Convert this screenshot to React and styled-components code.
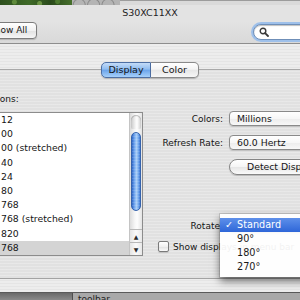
import React from 'react';
import styled, { createGlobalStyle } from 'styled-components';

const Global = createGlobalStyle`
  html, body { margin: 0; padding: 0; background: #e9e9e9; }
  body { width: 300px; height: 300px; overflow: hidden; }
`;

const Screen = styled.div`
  width: 300px;
  height: 300px;
  overflow: hidden;
  display: flex;
  flex-direction: column;
  font-family: "DejaVu Sans", "Liberation Sans", sans-serif;
  font-size: 9px;
  color: #151515;
`;

const DesktopStrip = styled.div`
  display: flex;
  height: 5px;
  flex: none;
`;

const Foliage = styled.div`
  width: 72px;
  background:
    radial-gradient(circle at 20% 40%, #5f8a3c 0 2px, transparent 3px),
    radial-gradient(circle at 55% 70%, #6c9444 0 2px, transparent 3px),
    radial-gradient(circle at 80% 30%, #4d7a30 0 2px, transparent 3px),
    linear-gradient(90deg, #2d4f1d, #3f6a28 40%, #2a4a1b 70%, #466f2c);
`;

const GreyDesk = styled.div`
  width: 48px;
  background:
    radial-gradient(circle at 15% 100%, transparent 0 5px, #8a8a8a 6px, transparent 7px),
    radial-gradient(circle at 45% 100%, transparent 0 5px, #8a8a8a 6px, transparent 7px),
    radial-gradient(circle at 75% 100%, transparent 0 5px, #8a8a8a 6px, transparent 7px),
    #b4b4b4;
`;

const WindowTop = styled.div`
  flex: 1;
  background: linear-gradient(#9c9c9c 0 1px, #dadada 1px);
`;

const TitleBar = styled.div`
  height: 16px;
  flex: none;
  line-height: 16px;
  text-align: center;
  font-size: 9.5px;
  color: #1e1e1e;
  background: #e3e3e3;
`;

const Toolbar = styled.div`
  height: 23px;
  flex: none;
  display: flex;
  justify-content: space-between;
  align-items: flex-start;
  padding-top: 1px;
  box-sizing: border-box;
  background: linear-gradient(#e3e3e3, #d9d9d9);
  border-bottom: 1px solid #8d8d8d;
`;

const ToolButton = styled.div`
  margin-left: -18px;
  width: 55px;
  height: 17px;
  box-sizing: border-box;
  border: 1px solid #7c7c7c;
  border-radius: 4px;
  background: linear-gradient(#ffffff, #f1f1f1 50%, #e1e1e1 51%, #f6f6f6);
  box-shadow: 0 1px 1px rgba(0, 0, 0, 0.18);
  padding-left: 6px;
  line-height: 15px;
  white-space: nowrap;
  font-size: 9px;
`;

const SearchField = styled.div`
  margin-top: 2px;
  margin-right: -12px;
  width: 59px;
  height: 16px;
  box-sizing: border-box;
  border-radius: 8px;
  background: #fff;
  border: 1px solid #6f8fb8;
  box-shadow: 0 0 0 2px #9ec0ea, inset 0 1px 1px rgba(0, 0, 0, 0.25);
  display: flex;
  align-items: center;
  padding-left: 5px;
`;

const Content = styled.div`
  flex: 1;
  display: flex;
  flex-direction: column;
  background: repeating-linear-gradient(#ededed 0 2px, #e5e5e5 2px 3px);
`;

const TabBox = styled.div`
  margin-top: 25px;
  height: 210px;
  box-sizing: border-box;
  border-top: 1px solid #a9a9a9;
  border-bottom: 1px solid #a3a3a3;
  display: flex;
  flex-direction: column;
  background: repeating-linear-gradient(rgba(0,0,0,0.02) 0 2px, rgba(0,0,0,0.05) 2px 3px);
`;

const Tabs = styled.div`
  margin-top: -8px;
  display: flex;
  justify-content: center;
`;

const Tab = styled.div`
  height: 16px;
  box-sizing: border-box;
  width: ${p => p.w}px;
  text-align: center;
  line-height: 14px;
  font-size: 9.5px;
  border: 1px solid ${p => (p.active ? '#4d6fa4' : '#8a8a8a')};
  border-radius: ${p => (p.first ? '5px 0 0 5px' : '0 5px 5px 0')};
  ${p => (p.first ? '' : 'border-left: none;')}
  background: ${p =>
    p.active
      ? 'linear-gradient(#c4dcf8, #8fbcf0 45%, #6aa3ea 50%, #a6d0fa)'
      : 'linear-gradient(#ffffff, #f4f4f4 45%, #e6e6e6 50%, #f7f7f7)'};
  box-shadow: 0 1px 1px rgba(0, 0, 0, 0.2);
`;

const Pane = styled.div`
  display: grid;
  grid-template-columns: 143px 1fr;
`;

const LeftCol = styled.div`
  display: flex;
  flex-direction: column;
`;

const ListLabel = styled.div`
  margin-top: 15px;
  margin-left: -36px;
  line-height: 12px;
  white-space: nowrap;
`;

const ListBox = styled.div`
  margin-top: 7px;
  margin-left: -2px;
  height: 144px;
  box-sizing: border-box;
  border: 1px solid #8c8c8c;
  background: #fff;
  display: flex;
`;

const Rows = styled.div`
  flex: 1;
  display: flex;
  flex-direction: column;
`;

const Row = styled.div`
  height: 14.2px;
  line-height: 14.2px;
  padding-left: 2px;
  white-space: nowrap;
  font-size: 9.3px;
  background: ${p => (p.selected ? '#d4d4d4' : 'transparent')};
`;

const ScrollBar = styled.div`
  width: 12px;
  flex: none;
  display: flex;
  flex-direction: column;
  border-left: 1px solid #c4c4c4;
  background: linear-gradient(90deg, #dcdcdc, #f6f6f6 40%, #fdfdfd 60%, #e4e4e4);
`;

const Track = styled.div`
  flex: 1;
  display: flex;
  flex-direction: column;
  align-items: center;
  padding-top: 2px;
`;

const TrackCap = styled.div`
  width: 10px;
  height: 14px;
  border-radius: 5px 5px 2px 2px;
  background: linear-gradient(90deg, #c9c9c9, #f4f4f4 45%, #ffffff 60%, #d0d0d0);
  box-shadow: inset 0 1px 1px rgba(0,0,0,0.25);
`;

const Thumb = styled.div`
  margin-top: 3px;
  width: 10px;
  height: 79px;
  border-radius: 5px;
  box-sizing: border-box;
  border: 1px solid #3563ad;
  background:
    repeating-linear-gradient(rgba(255,255,255,0.12) 0 1px, transparent 1px 3px),
    linear-gradient(90deg, #2f67c8, #6ea4ee 30%, #a8cdf7 55%, #7fb2f0 75%, #3e78d6);
`;

const ArrowBtn = styled.div`
  height: 12px;
  border-top: 1px solid #b8b8b8;
  display: flex;
  align-items: center;
  justify-content: center;
  font-size: 6px;
  color: #2a2a2a;
  background: linear-gradient(90deg, #e4e4e4, #fafafa 50%, #e8e8e8);
`;

const RightCol = styled.div`
  padding-top: 33px;
  display: flex;
  flex-direction: column;
`;

const FormRow = styled.div`
  display: grid;
  grid-template-columns: 80px 90px;
  column-gap: 6px;
  align-items: center;
  margin-top: ${p => p.mt || 0}px;
`;

const Label = styled.div`
  text-align: right;
  white-space: nowrap;
`;

const Popup = styled.div`
  height: 15px;
  box-sizing: border-box;
  border: 1px solid #8a8a8a;
  border-radius: 4px;
  background: linear-gradient(#ffffff, #f7f7f7 50%, #ececec 51%, #f8f8f8);
  box-shadow: 0 1px 1px rgba(0, 0, 0, 0.15);
  padding-left: 7px;
  line-height: 13px;
  white-space: nowrap;
  font-size: 9.3px;
  position: relative;
`;

const PillButton = styled.div`
  height: 16px;
  box-sizing: border-box;
  border: 1px solid #858585;
  border-radius: 8px;
  background: linear-gradient(#ffffff, #f5f5f5 50%, #e6e6e6 51%, #fafafa);
  box-shadow: 0 1px 1px rgba(0, 0, 0, 0.18);
  padding-left: 17px;
  line-height: 14px;
  white-space: nowrap;
  font-size: 9.3px;
`;

const Menu = styled.div`
  position: absolute;
  top: -5px;
  left: -10px;
  width: 95px;
  padding: 4px 0 3px;
  background: rgba(255, 255, 255, 0.94);
  box-shadow: 0 4px 8px rgba(0, 0, 0, 0.55), 0 0 0 1px rgba(0,0,0,0.12);
  z-index: 5;
`;

const MenuItem = styled.div`
  height: 14px;
  line-height: 14px;
  padding-left: 17px;
  position: relative;
  font-size: 9.7px;
  color: ${p => (p.hl ? '#fff' : '#1a1a1a')};
  background: ${p => (p.hl ? 'linear-gradient(#5e90ea, #2e66d8)' : 'transparent')};
`;

const Check = styled.span`
  position: absolute;
  left: 5px;
  top: 0;
  font-weight: bold;
`;

const CheckRow = styled.div`
  margin-top: 8px;
  padding-left: 15px;
  display: flex;
  align-items: center;
  white-space: nowrap;
`;

const CheckBox = styled.div`
  width: 11px;
  height: 11px;
  box-sizing: border-box;
  border: 1px solid #7a7a7a;
  border-radius: 2px;
  background: linear-gradient(#ffffff, #f0f0f0 50%, #e0e0e0 51%, #fafafa);
  box-shadow: 0 1px 1px rgba(0, 0, 0, 0.15);
  margin-right: 4px;
`;

const BottomBand = styled.div`
  height: 7px;
  flex: none;
  display: flex;
  background: linear-gradient(#6a6a6a, #8a8a8a);
  border-top: 1px solid #5a5a5a;
`;

const BandSeg = styled.div`
  width: ${p => p.w}px;
  border-right: 1px solid #4e4e4e;
`;

const BandText = styled.div`
  padding-left: 5px;
  font-size: 9px;
  line-height: 12px;
  color: #222;
  background: #a9a9a9;
  flex: 1;
`;

const rows = ['12', '00', '00 (stretched)', '40', '24', '80', '768', '768 (stretched)', '820', '768'];

function SearchIcon() {
  return (
    <svg width="10" height="10" viewBox="0 0 10 10">
      <circle cx="4" cy="4" r="2.8" fill="none" stroke="#3a3a3a" strokeWidth="1.4" />
      <line x1="6.1" y1="6.1" x2="9" y2="9" stroke="#3a3a3a" strokeWidth="1.8" strokeLinecap="round" />
    </svg>
  );
}

export default function App() {
  return (
    <Screen>
      <Global />
      <DesktopStrip>
        <Foliage />
        <GreyDesk />
        <WindowTop />
      </DesktopStrip>
      <TitleBar>S30XC11XX</TitleBar>
      <Toolbar>
        <ToolButton>Show All</ToolButton>
        <SearchField>
          <SearchIcon />
        </SearchField>
      </Toolbar>
      <Content>
        <TabBox>
          <Tabs>
            <Tab first active w={50}>Display</Tab>
            <Tab w={48}>Color</Tab>
          </Tabs>
          <Pane>
            <LeftCol>
              <ListLabel>Resolutions:</ListLabel>
              <ListBox>
                <Rows>
                  {rows.map((r, i) => (
                    <Row key={i} selected={i === rows.length - 1}>{r}</Row>
                  ))}
                </Rows>
                <ScrollBar>
                  <Track>
                    <TrackCap />
                    <Thumb />
                  </Track>
                  <ArrowBtn>▲</ArrowBtn>
                  <ArrowBtn>▼</ArrowBtn>
                </ScrollBar>
              </ListBox>
            </LeftCol>
            <RightCol>
              <FormRow>
                <Label>Colors:</Label>
                <Popup>Millions</Popup>
              </FormRow>
              <FormRow mt={9}>
                <Label>Refresh Rate:</Label>
                <Popup>60.0 Hertz</Popup>
              </FormRow>
              <FormRow mt={9}>
                <span />
                <PillButton>Detect Displays</PillButton>
              </FormRow>
              <FormRow mt={43}>
                <Label>Rotate:</Label>
                <Popup>
                  Standard
                  <Menu>
                    <MenuItem hl>
                      <Check>✓</Check>Standard
                    </MenuItem>
                    <MenuItem>90°</MenuItem>
                    <MenuItem>180°</MenuItem>
                    <MenuItem>270°</MenuItem>
                  </Menu>
                </Popup>
              </FormRow>
              <CheckRow>
                <CheckBox />
                Show displays in menu bar
              </CheckRow>
            </RightCol>
          </Pane>
        </TabBox>
      </Content>
      <BottomBand>
        <BandSeg w={72} />
        <BandText>toolbar</BandText>
      </BottomBand>
    </Screen>
  );
}
